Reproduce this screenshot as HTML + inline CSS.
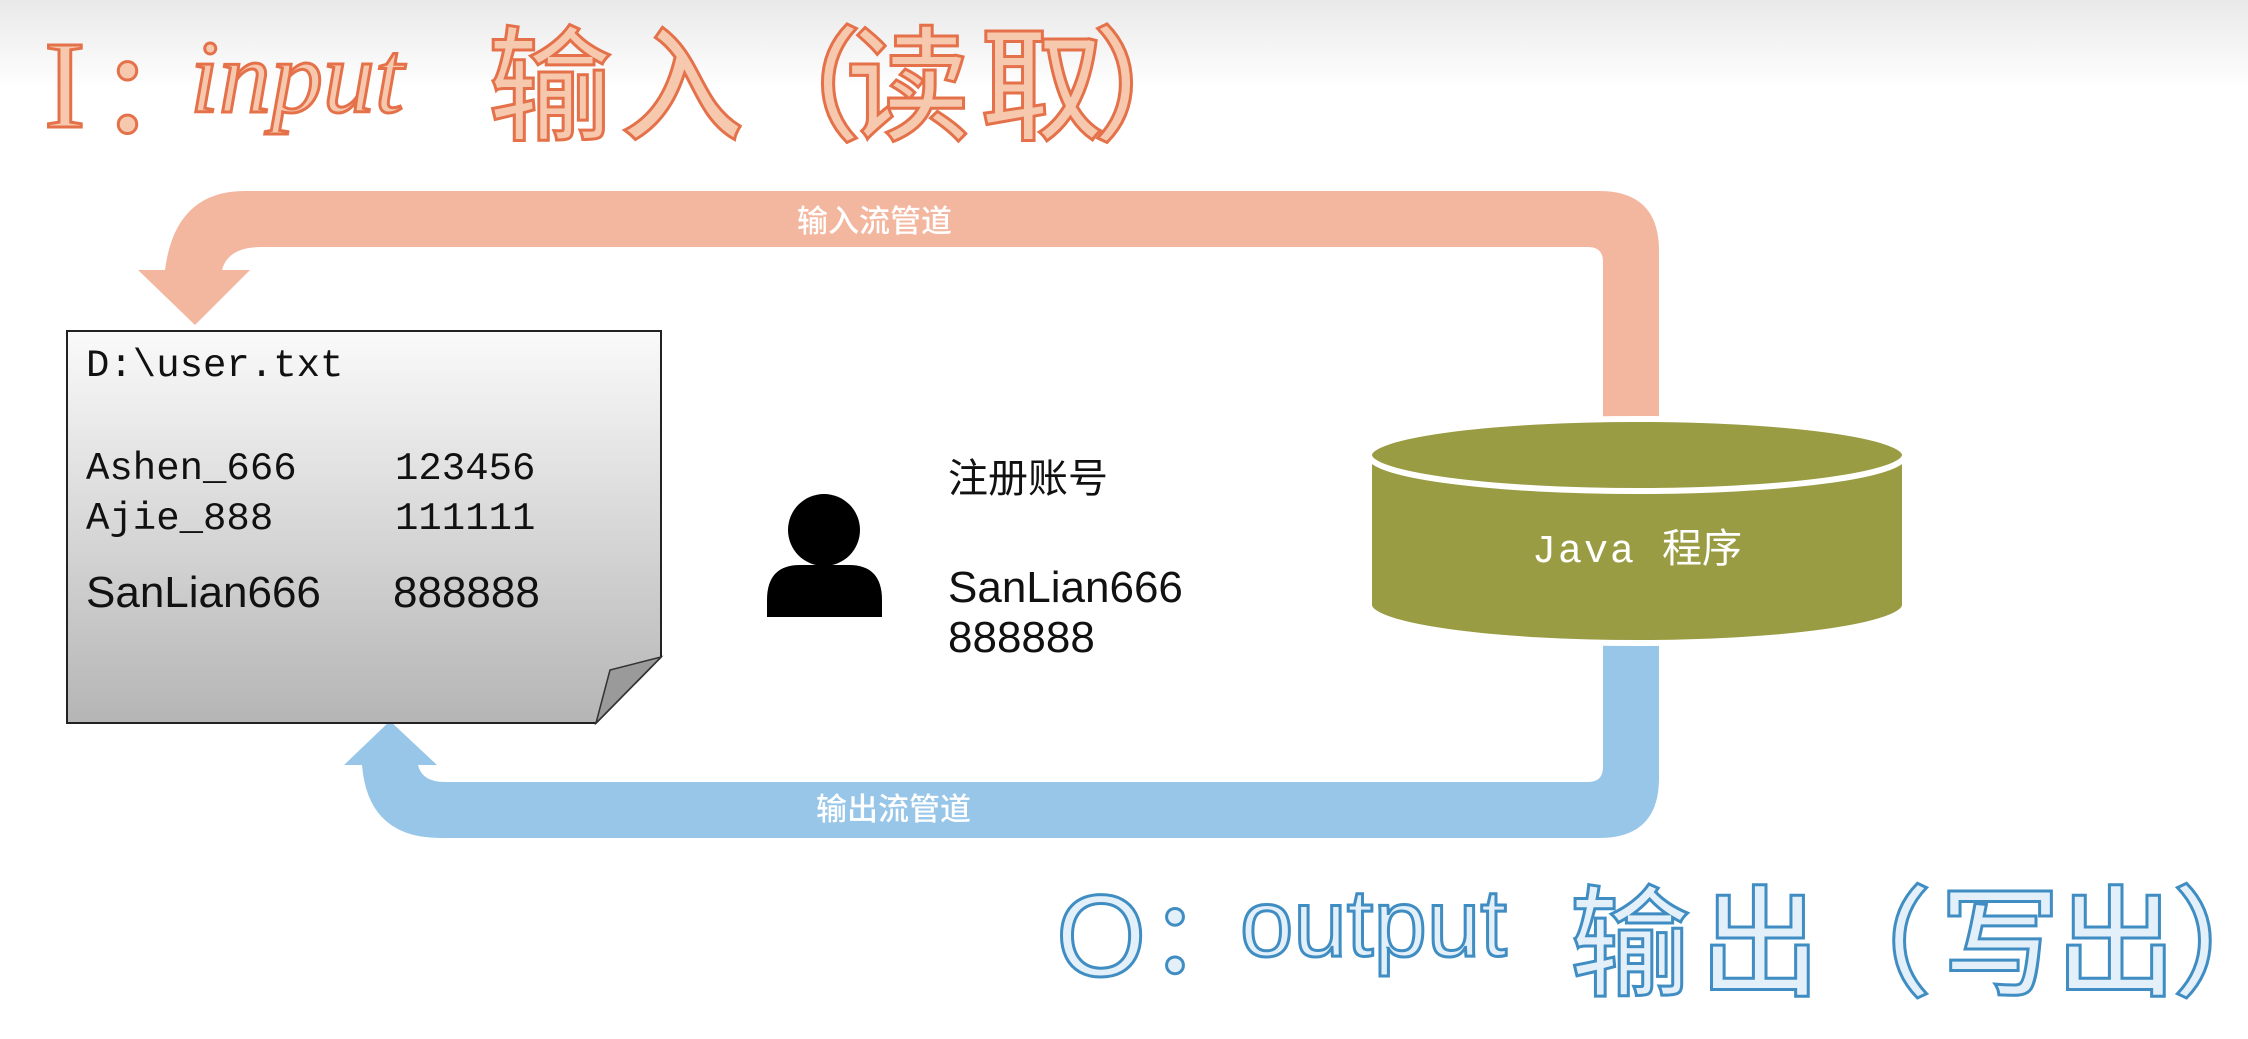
<!DOCTYPE html>
<html><head><meta charset="utf-8"><style>
html,body{margin:0;padding:0}
body{width:2248px;height:1039px;position:relative;overflow:hidden;background:#fff;font-family:"Liberation Sans","Noto Sans CJK SC",sans-serif}
.bgtop{position:absolute;left:0;top:0;width:2248px;height:90px;background:linear-gradient(#e9e9e9,#fff)}
.a{position:absolute;white-space:nowrap;line-height:1}
.pk{color:#f6c9ae;-webkit-text-stroke:3px #e5714a}
.bl{color:#e3f0fa;-webkit-text-stroke:3px #3f8dc2}
.cj{font-family:"Noto Sans CJK SC",sans-serif;font-weight:500}
.mono{font-family:"Liberation Mono",monospace;font-size:39px;color:#111}
</style></head><body>
<div class="bgtop"></div>

<!-- top title -->
<div class="a pk" style="left:44px;top:24px;font-family:'Liberation Serif',serif;font-size:125px">I</div>
<div class="a pk cj" style="left:100px;top:30px;font-size:110px">：</div>
<div class="a pk" style="left:190px;top:26px;font-family:'Liberation Serif',serif;font-style:italic;font-size:104px">input</div>
<div class="a pk cj" style="left:488px;top:14px;font-size:124px">输</div>
<div class="a pk cj" style="left:620px;top:14px;font-size:124px">入</div>
<div class="a pk cj" style="left:738px;top:14px;font-size:124px">（</div>
<div class="a pk cj" style="left:846px;top:14px;font-size:124px">读</div>
<div class="a pk cj" style="left:980px;top:14px;font-size:124px">取</div>
<div class="a pk cj" style="left:1092px;top:14px;font-size:124px">）</div>

<!-- arrows -->
<svg class="a" style="left:0;top:0" width="2248" height="1039">
<path d="M245 191 L1599 191 Q1659 191 1659 251 L1659 440 L1603 440 L1603 262 Q1603 247 1588 247 L262 247 Q228 247 222 270 L250 270 L195 325 L138 270 L165 270 Q175 191 245 191 Z" fill="#f3b7a0"/>
<path d="M1659 630 L1659 778 Q1659 838 1599 838 L440 838 Q368 838 362 765 L344 765 L390 721 L437 765 L418 765 Q422 782 445 782 L1588 782 Q1603 782 1603 767 L1603 630 Z" fill="#98c6e8"/>
<!-- cylinder -->
<path d="M1369 455 L1369 605 A268 38 0 0 0 1905 605 L1905 455 Z" fill="#999c42" stroke="#fff" stroke-width="6"/>
<ellipse cx="1637" cy="455" rx="268" ry="36" fill="#999c42" stroke="#fff" stroke-width="6"/>
<!-- file -->
<defs><linearGradient id="g" x1="0" y1="0" x2="0" y2="1"><stop offset="0" stop-color="#fafafa"/><stop offset="1" stop-color="#b5b5b5"/></linearGradient></defs>
<path d="M67 331 L661 331 L661 657 L596 723 L67 723 Z" fill="url(#g)" stroke="#222" stroke-width="2"/>
<path d="M661 657 L610 670 L596 723 Z" fill="#9a9a9a" stroke="#333" stroke-width="1.5"/>
<!-- person -->
<circle cx="824" cy="530" r="36" fill="#000"/>
<path d="M767 617 L767 600 Q767 565 800 565 L849 565 Q882 565 882 600 L882 617 Z" fill="#000"/>
</svg>

<div class="a cj" style="left:797px;top:203px;font-size:31px;color:#fff">输入流管道</div>
<div class="a cj" style="left:816px;top:791px;font-size:31px;color:#fff">输出流管道</div>

<div class="a mono" style="left:86px;top:347px">D:\user.txt</div>
<div class="a mono" style="left:86px;top:450px">Ashen_666</div>
<div class="a mono" style="left:395px;top:450px">123456</div>
<div class="a mono" style="left:86px;top:500px">Ajie_888</div>
<div class="a mono" style="left:395px;top:500px">111111</div>
<div class="a" style="left:86px;top:571px;font-size:44px;color:#111">SanLian666</div>
<div class="a" style="left:393px;top:571px;font-size:44px;color:#111">888888</div>

<div class="a cj" style="left:948px;top:455px;font-size:40px;font-weight:400;color:#111">注册账号</div>
<div class="a" style="left:948px;top:566px;font-size:44px;color:#111">SanLian666</div>
<div class="a" style="left:948px;top:616px;font-size:44px;color:#111">888888</div>

<div class="a" style="left:1532px;top:525px;font-size:40px;color:#fff"><span style="font-family:'Liberation Mono',monospace;letter-spacing:2px">Java </span><span class="cj" style="font-weight:400">程序</span></div>

<!-- bottom title -->
<div class="a bl" style="left:1056px;top:878px;font-family:'Liberation Sans',sans-serif;font-size:116px">O</div>
<div class="a bl cj" style="left:1150px;top:880px;font-size:100px">：</div>
<div class="a bl" style="left:1240px;top:876px;font-family:'Liberation Sans',sans-serif;font-size:96px">output</div>
<div class="a bl cj" style="left:1570px;top:874px;font-size:120px">输</div>
<div class="a bl cj" style="left:1700px;top:874px;font-size:120px">出</div>
<div class="a bl cj" style="left:1812px;top:874px;font-size:120px">（</div>
<div class="a bl cj" style="left:1940px;top:874px;font-size:120px">写</div>
<div class="a bl cj" style="left:2056px;top:874px;font-size:120px">出</div>
<div class="a bl cj" style="left:2172px;top:874px;font-size:120px">）</div>
</body></html>
